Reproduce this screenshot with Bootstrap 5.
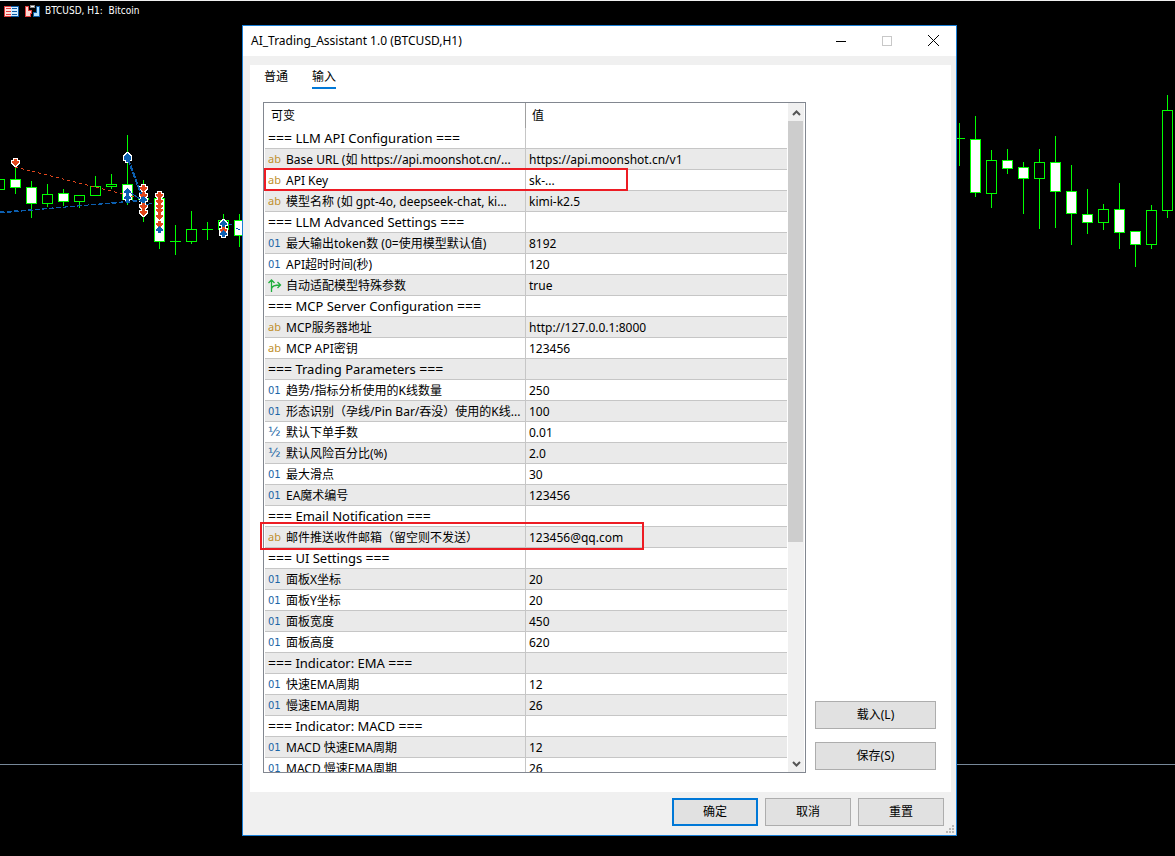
<!DOCTYPE html>
<html lang="zh-CN">
<head>
<meta charset="utf-8">
<meta name="viewport" content="width=device-width, initial-scale=1">
<title>AI_Trading_Assistant 1.0 (BTCUSD,H1)</title>
<link href="https://cdn.jsdelivr.net/npm/bootstrap@5.3.0/dist/css/bootstrap.min.css" rel="stylesheet">
<style>
  :root { --accent: #0078d7; --line: #c6c6c6; --face: #f0f0f0; --ink: #000; }
  body { background: #000; color: var(--ink); font: 12px/20px "Noto Sans", "Noto Sans CJK SC", sans-serif; }
  .desktop { height: 100vh; min-height: 480px; border-top: 1px solid #f0f0f0; }
  .chart-title { color: #fff; font: 10px/14px "DejaVu Sans Condensed", "Noto Sans", sans-serif; padding: 3px 4px; }
  .candles { position: absolute; top: 0; height: 300px; }
  .candles-left { left: 0; width: 242px; }
  .candles-right { right: 0; width: 218px; }
  .level { position: absolute; left: 0; right: 0; bottom: 91px; border-top: 1px solid #778899; }

  .window { position: absolute; top: 24px; right: 218px; bottom: 20px; left: 242px; background: var(--face); border: 1px solid #1a7fd6; }
  .titlebar { height: 30px; font-size: 12px; padding-left: 8px; }
  .titlebar button { width: 46px; height: 30px; background: none; border: 0; padding: 0 0 2px; }
  .sheet { margin: 9px 5px 0 7px; padding: 0 15px 19px 13px; min-height: 0; }
  .tabs { height: 37px; gap: 24px; padding-left: 1px; }
  .tabs .nav-link { padding: 2px 0 0; color: #000; background: none; height: 24px; border: 0; border-bottom: 2px solid transparent; border-radius: 0; line-height: 20px; }
  .tabs .nav-link.active { border-bottom-color: var(--accent); }
  .sheet-body { min-height: 0; }
  .grid-box { border: 1px solid #828790; padding: 0 1px; }
  .grid-view { overflow: hidden; }
  .params { table-layout: fixed; width: 100%; border-collapse: separate; border-spacing: 0; }
  .params th { font-weight: 400; height: 25px; padding: 1px 6px 0; line-height: 24px; }
  .params th:first-child { border-right: 1px solid #a0a0a0; }
  .params td { height: 21px; line-height: 18px; padding: 2px 3px 0; border-bottom: 1px solid var(--line); white-space: nowrap; overflow: hidden; }
  .params td:first-child { border-right: 1px solid var(--line); }
  .params tbody tr:nth-child(even) td { background: #eaeaea; }
  .kind { display: inline-block; width: 18px; line-height: 12px; vertical-align: 1px; }
  .kind svg { display: block; }
  .kind-flag { vertical-align: -2px; }
  .kind-text { color: #c0902c; font-size: 11px; }
  .kind-int { color: #1a66a6; font-family: "DejaVu Sans", sans-serif; font-size: 10px; }
  .kind-real { color: #1a66a6; font-family: "DejaVu Sans", sans-serif; font-size: 13px; }
  .params td.heading { font-size: 13px; padding: 0 3px; line-height: 19px; }
  .rule { font-size: 14px; line-height: 1; }
  .scroller { width: 16px; margin-left: 1px; background: var(--face); }
  .scroller button { border: 0; padding: 0; height: 18px; background: none; line-height: 1; }
  .thumb { background: #cdcdcd; width: 15px; height: 66.5%; }
  .side { width: 121px; margin-left: 9px; gap: 13px; padding-bottom: 3px; }
  .push { background: #e1e1e1; border: 1px solid #adadad; height: 28px; border-radius: 0; padding: 0; font-size: 12px; line-height: 20px; color: #000; }
  .push-default { border: 2px solid var(--accent); }
  .actions { height: 43px; gap: 7px; padding: 6px 12px 0 0; }
  .actions .push { width: 86px; }
  .grip { position: absolute; right: 2px; bottom: 2px; }
  .callout { position: absolute; border: 2px solid #ed1c24; pointer-events: none; }
  .callout-key { left: 21px; top: 142px; width: 364px; height: 23px; }
  .callout-mail { left: 17px; top: 496px; width: 384px; height: 28px; }
</style>
</head>
<body>
<main class="desktop position-relative overflow-hidden">
  <svg class="candles candles-left" id="left" shape-rendering="crispEdges"></svg>
  <svg class="candles candles-right" id="right" shape-rendering="crispEdges"></svg>
  <div class="level"></div>
  <header class="chart-title position-relative d-flex align-items-center">
    <svg width="15" height="12" shape-rendering="crispEdges" aria-hidden="true">
      <path fill="#e03c3c" d="M0 1h8v11H0z"/><path fill="#ffe0dc" d="M1 2h6v9H1z"/>
      <path fill="#0c5ba5" d="M7 1h8v11H7z"/><path fill="#d4ecff" d="M7 2h7v9H7z"/>
      <path fill="#e03c3c" d="M2 3h5v1H2zM2 6h5v1H2zM2 9h5v1H2z"/><path fill="#0c5ba5" d="M8 3h5v1H8zM8 6h5v1H8zM8 9h5v1H8z"/>
    </svg>
    <svg class="mx-1" width="18" height="12" viewBox="-2 0 18 12" shape-rendering="crispEdges" aria-hidden="true">
      <path fill="#e03c3c" d="M0 1h4v4h3v4H6v3H0z"/><path fill="#ffd6d0" d="M1 2h2v4h3v2H5v3H1z"/>
      <path fill="#0c5ba5" d="M11 1h4v11H8V7h3z"/><path fill="#b4e2ff" d="M12 2h2v9H9V8h3z"/>
      <path fill="#888" d="M5 0h5v3H5z"/><path fill="#fff" d="M6 1h3v1H6z"/>
    </svg>
    <span>BTCUSD, H1:&nbsp; Bitcoin</span>
  </header>

  <section class="window d-flex flex-column" role="dialog" aria-labelledby="caption">
    <div class="titlebar bg-white d-flex align-items-center flex-shrink-0">
      <span id="caption" class="me-auto">AI_Trading_Assistant 1.0 (BTCUSD,H1)</span>
      <button type="button" aria-label="最小化"><svg width="10" height="10" shape-rendering="crispEdges"><path fill="#000" d="M0 5h10v1H0z"/></svg></button>
      <button type="button" aria-label="最大化" disabled><svg width="10" height="10" shape-rendering="crispEdges"><path fill="#c8c8c8" fill-rule="evenodd" d="M0 0h10v10H0zM1 1v8h8V1z"/></svg></button>
      <button type="button" aria-label="关闭"><svg width="11" height="11"><path stroke="#000" d="M0 0l11 11M11 0L0 11"/></svg></button>
    </div>

    <div class="sheet bg-white flex-grow-1 d-flex flex-column">
      <nav class="tabs nav flex-nowrap flex-shrink-0" role="tablist">
        <button type="button" class="nav-link" role="tab" aria-selected="false">普通</button>
        <button type="button" class="nav-link active" role="tab" aria-selected="true">输入</button>
      </nav>
      <div class="sheet-body d-flex flex-grow-1">
        <div class="grid-box flex-grow-1 d-flex">
          <div class="grid-view flex-grow-1">
            <table class="params">
              <thead><tr><th scope="col">可变</th><th scope="col">值</th></tr></thead>
              <tbody>
                <tr><td class="heading"><span class="rule">===</span> LLM API Configuration <span class="rule">===</span></td><td></td></tr>
                <tr><td><span class="kind kind-text">ab</span>Base URL (如 https://api.moonshot.cn/...</td><td>https://api.moonshot.cn/v1</td></tr>
                <tr><td><span class="kind kind-text">ab</span>API Key</td><td>sk-...</td></tr>
                <tr><td><span class="kind kind-text">ab</span>模型名称 (如 gpt-4o, deepseek-chat, ki...</td><td>kimi-k2.5</td></tr>
                <tr><td class="heading"><span class="rule">===</span> LLM Advanced Settings <span class="rule">===</span></td><td></td></tr>
                <tr><td><span class="kind kind-int">01</span>最大输出token数 (0=使用模型默认值)</td><td>8192</td></tr>
                <tr><td><span class="kind kind-int">01</span>API超时时间(秒)</td><td>120</td></tr>
                <tr><td><span class="kind kind-flag"><svg width="14" height="13" viewBox="0 0 14 13" fill="none" stroke="#1fae3c" stroke-width="1.3"><path d="M3.500 13V1M.5 4l3-3 3 3M3.500 10c0-3 3-4 9-4M9.500 3l3 3-3 3"/></svg></span>自动适配模型特殊参数</td><td>true</td></tr>
                <tr><td class="heading"><span class="rule">===</span> MCP Server Configuration <span class="rule">===</span></td><td></td></tr>
                <tr><td><span class="kind kind-text">ab</span>MCP服务器地址</td><td>http://127.0.0.1:8000</td></tr>
                <tr><td><span class="kind kind-text">ab</span>MCP API密钥</td><td>123456</td></tr>
                <tr><td class="heading"><span class="rule">===</span> Trading Parameters <span class="rule">===</span></td><td></td></tr>
                <tr><td><span class="kind kind-int">01</span>趋势/指标分析使用的K线数量</td><td>250</td></tr>
                <tr><td><span class="kind kind-int">01</span>形态识别（孕线/Pin Bar/吞没）使用的K线...</td><td>100</td></tr>
                <tr><td><span class="kind kind-real">½</span>默认下单手数</td><td>0.01</td></tr>
                <tr><td><span class="kind kind-real">½</span>默认风险百分比(%)</td><td>2.0</td></tr>
                <tr><td><span class="kind kind-int">01</span>最大滑点</td><td>30</td></tr>
                <tr><td><span class="kind kind-int">01</span>EA魔术编号</td><td>123456</td></tr>
                <tr><td class="heading"><span class="rule">===</span> Email Notification <span class="rule">===</span></td><td></td></tr>
                <tr><td><span class="kind kind-text">ab</span>邮件推送收件邮箱（留空则不发送）</td><td>123456@qq.com</td></tr>
                <tr><td class="heading"><span class="rule">===</span> UI Settings <span class="rule">===</span></td><td></td></tr>
                <tr><td><span class="kind kind-int">01</span>面板X坐标</td><td>20</td></tr>
                <tr><td><span class="kind kind-int">01</span>面板Y坐标</td><td>20</td></tr>
                <tr><td><span class="kind kind-int">01</span>面板宽度</td><td>450</td></tr>
                <tr><td><span class="kind kind-int">01</span>面板高度</td><td>620</td></tr>
                <tr><td class="heading"><span class="rule">===</span> Indicator: EMA <span class="rule">===</span></td><td></td></tr>
                <tr><td><span class="kind kind-int">01</span>快速EMA周期</td><td>12</td></tr>
                <tr><td><span class="kind kind-int">01</span>慢速EMA周期</td><td>26</td></tr>
                <tr><td class="heading"><span class="rule">===</span> Indicator: MACD <span class="rule">===</span></td><td></td></tr>
                <tr><td><span class="kind kind-int">01</span>MACD 快速EMA周期</td><td>12</td></tr>
                <tr><td><span class="kind kind-int">01</span>MACD 慢速EMA周期</td><td>26</td></tr>
              </tbody>
            </table>
          </div>
          <div class="scroller d-flex flex-column flex-shrink-0">
            <button type="button" aria-label="向上"><svg width="9" height="6" viewBox="0 0 9 6"><path fill="none" stroke="#555" stroke-width="2" d="M1 5l3.500-3.500L8 5"/></svg></button>
            <div class="flex-grow-1"><div class="thumb"></div></div>
            <button type="button" aria-label="向下"><svg width="9" height="6" viewBox="0 0 9 6"><path fill="none" stroke="#555" stroke-width="2" d="M1 1l3.500 3.500L8 1"/></svg></button>
          </div>
        </div>
        <div class="side d-flex flex-column justify-content-end flex-shrink-0">
          <button type="button" class="btn push">载入(L)</button>
          <button type="button" class="btn push">保存(S)</button>
        </div>
      </div>
    </div>

    <div class="actions d-flex justify-content-end flex-shrink-0">
      <button type="button" class="btn push push-default">确定</button>
      <button type="button" class="btn push">取消</button>
      <button type="button" class="btn push">重置</button>
    </div>
    <svg class="grip" width="8" height="8" shape-rendering="crispEdges" aria-hidden="true"><path fill="#b8b8b8" d="M6 0h2v2H6zM3 3h2v2H3zM6 3h2v2H6zM0 6h2v2H0zM3 6h2v2H3zM6 6h2v2H6z"/></svg>
    <div class="callout callout-key"></div>
    <div class="callout callout-mail"></div>
  </section>
</main>
<script>
  // Each candle: centre x, body top, body bottom, wick top, wick bottom, filled.
  const leftBars = [
    [-1,179,190,179,190,0],[15,179,188,165,194,1],[31,187,204,181,218,1],[47,194,204,184,207,0],[63,193,202,189,206,1],
    [79,195,202,195,208,0],[95,186,196,176,196,0],[111,184,187,174,189,0],[127,184,200,135,205,1],[143,198,200,180,222,0],
    [159,198,242,193,249,1],[175,241,242,225,255,0],[191,229,242,211,244,0],[207,229,230,222,240,0],[223,220,230,214,236,0],[239,220,236,214,247,1]];
  const rightBars = [
    [2,138,139,123,166,0],[18,139,193,116,197,1],[34,160,194,150,208,0],[50,160,169,149,174,1],[66,167,179,162,214,1],
    [82,162,179,149,229,0],[98,162,192,136,228,1],[114,191,214,165,245,1],[130,214,223,189,234,1],[146,209,223,204,230,0],
    [162,209,233,183,249,1],[178,231,245,231,267,1],[194,210,245,205,249,0],[210,110,211,95,218,0]];
  const box = (x, y, w, h, f) => `<rect x="${x}" y="${y}" width="${w}" height="${h}" fill="${f}"/>`;
  const draw = bars => bars.map(([x, t, b, hi, lo, full]) =>
    box(x, hi - 1, 1, lo - hi, '#0f0') + box(x - 5, t - 1, 11, b - t, '#0f0') +
    (b - t > 2 ? box(x - 4, t, 9, b - t - 2, full ? '#fff' : '#000') : '')).join('');
  // Trade marks: x, y, buy or sell.
  const marks = [[15,161,0],[127,156,1],[127,158,1],[127,191,1],[127,197,1],[143,187,0],[143,194,0],[143,211,0],[143,205,0],[143,199,1],
    [159,194,0],[159,200,0],[159,205,0],[159,209,0],[159,215,0],[159,223,0],[159,229,1],[223,229,0],[223,233,1],[223,223,1]];
  const up = 'M0-4h1v1h1v1h1v1h1v2h-2v2h-3v-2h-2v-2h1v-1h1v-1h1z';
  const down = 'M-1-3h3v2h2v2h-1v1h-1v1h-1v1h-1v-1h-1v-1h-1v-1h-1v-2h2z';
  const place = attrs => marks.map(([x, y, buy]) => `<path transform="translate(${x} ${y})" ${attrs(buy)} d="${buy ? up : down}"/>`).join('');
  const under = place(() => 'fill="#fff" stroke="#fff" stroke-width="2"');
  const over = place(buy => `fill="${buy ? '#0c5fb0' : '#e2461c'}"`);
  const trails = `<g fill="none" stroke="#e2461c"><path stroke-dasharray="3 3" d="M15 166L143 198"/></g>
    <g fill="none" stroke="#0c5fb0"><path stroke-dasharray="5 2" d="M0 212L143 199"/><path stroke-dasharray="4 3" d="M0 211L143 200"/>
    <path stroke-width="2" stroke-dasharray="6 1" d="M128 158L143 198"/><path d="M128 190L140 198M146 204L152 202M228 223l4 1M236 227l4 2"/></g>`;
  document.getElementById('left').innerHTML = draw(leftBars) + under + trails + over;
  document.getElementById('right').innerHTML = draw(rightBars);
</script>
<script src="https://cdn.jsdelivr.net/npm/bootstrap@5.3.0/dist/js/bootstrap.bundle.min.js"></script>
</body>
</html>
